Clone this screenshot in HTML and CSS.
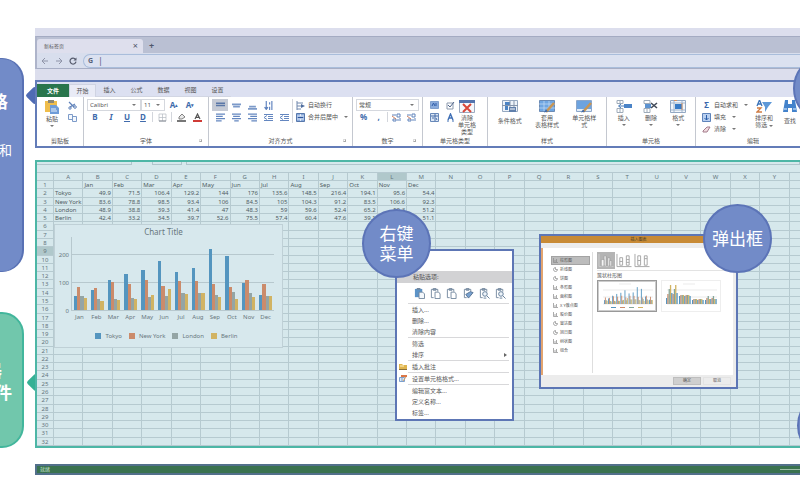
FILE: index.html
```html
<!DOCTYPE html>
<html lang="zh-CN">
<head>
<meta charset="utf-8">
<title>表格组件</title>
<link rel="stylesheet" href="styles.css">
</head>
<body>
<svg class="defs" aria-hidden="true">
  <symbol id="back" viewBox="0 0 8 8"><path d="M7 4H1M4 1L1 4l3 3" fill="none" stroke="#8f94a8"/></symbol>
  <symbol id="forward" viewBox="0 0 8 8"><path d="M1 4h6M4 1l3 3-3 3" fill="none" stroke="#8f94a8"/></symbol>
  <symbol id="reload" viewBox="0 0 8 8"><path d="M6.5 2.3A3 3 0 1 0 7 4.6" fill="none" stroke="#555a6c" stroke-width="1.2"/><path d="M7.5.5v3h-3z" fill="#555a6c"/></symbol>
  <symbol id="paste" viewBox="0 0 14 14"><path d="M0 1h12v11H0z" fill="#efbd4c"/><path d="M3 0h6v3H3z" fill="#8a8675"/><path d="M5 5h6l3 3v6H5z" fill="#6f9cd8"/><path d="M6 9h5M6 11h6" stroke="#e8f0fa"/></symbol>
  <symbol id="cut" viewBox="0 0 9 9"><path d="M1 1l5 5M2 6l5-3" stroke="#5e81b9" stroke-width="1.2"/><circle cx="7" cy="6" r="1.3" fill="none" stroke="#5e81b9"/><circle cx="2" cy="7" r="1.2" fill="none" stroke="#5e81b9"/></symbol>
  <symbol id="copy" viewBox="0 0 9 9"><path d="M.5 1.500h4v5h-4zM4.500 3.500h4v5h-4z" fill="#f4f8fd" stroke="#7d9bc9"/></symbol>
  <symbol id="border" viewBox="0 0 9 9"><path d="M1 1h7v7H1zM4.500 1v7M1 4.500h7" fill="none" stroke="#b5bac2" stroke-width=".7"/><path d="M1 8h7" stroke="#868b94"/></symbol>
  <symbol id="fill" viewBox="0 0 9 9"><path d="M2 4l3-3 3 3-3 2H2z" fill="#e8e8e8" stroke="#666" stroke-width=".8"/><path d="M0 8h9" stroke="#555" stroke-width="1.600"/></symbol>
  <symbol id="fontcolor" viewBox="0 0 9 9"><path d="M2 6l2.500-5L7 6M3 4.300h3" fill="none" stroke="#555" stroke-width="1.200"/><path d="M0 8h9" stroke="#cf3b36" stroke-width="2"/></symbol>
  <symbol id="vtop" viewBox="0 0 8 8"><path d="M0 2h8M0 4h8" stroke="#5a77a8" stroke-width="1.500"/></symbol>
  <symbol id="vmid" viewBox="0 0 8 8"><path d="M0 3h8M1 5h6" stroke="#7c9ac9" stroke-width="1.500"/></symbol>
  <symbol id="vbot" viewBox="0 0 8 8"><path d="M1 5h6M0 7h8" stroke="#7c9ac9" stroke-width="1.400"/></symbol>
  <symbol id="left" viewBox="0 0 8 8"><path d="M0 1h8M0 3h6M0 5h8M0 7h5" stroke="#6487c0"/></symbol>
  <symbol id="center" viewBox="0 0 8 8"><path d="M0 1h8M1 3h6M0 5h8M2 7h4" stroke="#6487c0"/></symbol>
  <symbol id="right" viewBox="0 0 8 8"><path d="M0 1h8M2 3h6M0 5h8M3 7h5" stroke="#6487c0"/></symbol>
  <symbol id="orient" viewBox="0 0 8 8"><path d="M2 0v7M0.500 5.500L2 7.500l1.500-2M5 1v2M5 5v3M7 0v8" fill="none" stroke="#5a7fbd"/></symbol>
  <symbol id="outdent" viewBox="0 0 9 8"><path d="M0 1h9M4 3h5M4 5h5M0 7h9M3 2L0 4l3 2" fill="none" stroke="#6487c0"/></symbol>
  <symbol id="wrap" viewBox="0 0 9 9"><path d="M1 0v9M1 2h6M1 5h6M1 8h4" stroke="#7188ad"/><path d="M5 3v4l4-2z" fill="#506e9e"/></symbol>
  <symbol id="merge" viewBox="0 0 9 9"><path d="M.5.500h8v8h-8z" fill="#8aabdc" stroke="#5878ab"/><path d="M1 3h7M1 6h7M4.500 1v2M4.500 6v2" stroke="#fff" stroke-width=".7"/><path d="M2 4.500h5" stroke="#2f559a"/></symbol>
  <symbol id="decimal" viewBox="0 0 9 9"><path d="M0 2h4M5 1h3v3H5zM1 6h3v2H1zM6 6v2M8 5v3" fill="none" stroke="#6084bc"/><path d="M0 3l4 3" stroke="#d28260"/></symbol>
  <symbol id="block" viewBox="0 0 9 9"><path d="M.5.500h8v7h-8z" fill="#8aabdc" stroke="#7f9fcd"/><path d="M2 5l1.500-3L5 5M6 2v3" fill="none" stroke="#2e5da8"/></symbol>
  <symbol id="check" viewBox="0 0 9 9"><path d="M1 2h6v6H1z" fill="#fff" stroke="#8c99ad"/><path d="M2 4l2 2 4-5" fill="none" stroke="#4d6389"/></symbol>
  <symbol id="list" viewBox="0 0 9 9"><path d="M.5.500h8v8h-8z" fill="#dce7f5" stroke="#6788b9"/><path d="M5 1v7M1 3h7M2 5h2M6 5l1 2" stroke="#476da8"/></symbol>
  <symbol id="bluea" viewBox="0 0 9 9"><path d="M2 7l2.500-6L7 7M3 5h3" fill="none" stroke="#4170b5" stroke-width="1.400"/><path d="M1 8h2M6 8h2" stroke="#4170b5"/></symbol>
  <symbol id="clear" viewBox="0 0 16 13"><path d="M.5.500h15v12H.5z" fill="#f5f7fb" stroke="#9ba9c0"/><path d="M0 1.500h16" stroke="#5273ad" stroke-width="3"/><path d="M4 4l8 8M12 4l-8 8" stroke="#d84538" stroke-width="2"/></symbol>
  <symbol id="cond" viewBox="0 0 16 13"><path d="M.5.500h15v11H.5z" fill="#edf3fa" stroke="#95a8c0"/><path d="M3 2h5v3H3zM3 6h3v4H3z" fill="#4a82c3"/><path d="M8 1v10M0 5.500h16M12 1v10" stroke="#8595ab"/><path d="M7 7h7v5H7z" fill="#5f7fab"/><path d="M8 9h5" stroke="#fff"/></symbol>
  <symbol id="tablestyle" viewBox="0 0 16 13"><path d="M.5.500h15v11H.5z" fill="#6fa6e2" stroke="#6b8bb5"/><path d="M0 4h16M0 8h16M5 1v10M10 1v10" stroke="#c5dcf5" stroke-width=".7"/><path d="M7 12l8-9" stroke="#c99552" stroke-width="2.500"/><path d="M5 12.500l4-1-2-2z" fill="#3a67ab"/></symbol>
  <symbol id="cellstyle" viewBox="0 0 16 13"><path d="M.5.500h15v11H.5z" fill="#e2edf8" stroke="#8ba6ca"/><path d="M1 1h14v8H1z" fill="#6da3df"/><path d="M7 12l8-9" stroke="#c99552" stroke-width="2.500"/><path d="M5 12.500l4-1-2-2z" fill="#3a67ab"/></symbol>
  <symbol id="insert" viewBox="0 0 16 13"><path d="M1 .5h6v3H1zM1 8.500h6v4H1zM4 1v3M4 9v3" fill="#fff" stroke="#9eabb9"/><path d="M8 4h8v4H8z" fill="#4a83c7"/><path d="M3 6h5M5 4L2.500 6 5 8" fill="none" stroke="#4478b7"/></symbol>
  <symbol id="delete" viewBox="0 0 16 13"><path d="M1 .5h6v3H1zM1 8.500h6v4H1zM4 9v3" fill="#fff" stroke="#9eabb9"/><path d="M2 4h6v4H2z" fill="#5c93d1"/><path d="M8 3l6 5M14 3L8 8" stroke="#424b59" stroke-width="1.600"/></symbol>
  <symbol id="format" viewBox="0 0 16 13"><path d="M.5.500h15v12H.5z" fill="#f2f6fb" stroke="#93a8c3"/><path d="M4 1v11M12 1v11M1 3h14M1 10h14" stroke="#a0b5ce"/><path d="M5 4h7v5H5z" fill="#377bc7"/><path d="M4 .5h3M12 3v7" stroke="#d49262"/></symbol>
  <symbol id="fillblue" viewBox="0 0 9 9"><path d="M.5.500h8v8h-8z" fill="#b8cff0" stroke="#5e83ba"/><path d="M4.500 2v5M2.500 5l2 2 2-2" fill="none" stroke="#285da9"/></symbol>
  <symbol id="eraser" viewBox="0 0 9 9"><path d="M1 6l4-4h3L5 7H1z" fill="#f1dce0" stroke="#a47c8c"/></symbol>
  <symbol id="sort" viewBox="0 0 16 13"><path d="M1 6l2.500-6L6 6M2 4h3" fill="none" stroke="#3b73b9" stroke-width="1.300"/><path d="M1 8h4l-4 4h5" fill="none" stroke="#d07c43" stroke-width="1.300"/><path d="M6 2h10l-4 5-3 5V7z" fill="#5d98d8"/></symbol>
  <symbol id="find" viewBox="0 0 16 13"><path d="M3 0h3v4h4V0h3l2 12h-5V8H6v4H1z" fill="#4382cb"/><path d="M2 9h3M11 9h3" stroke="#93bbe8" stroke-width="2"/></symbol>
  <symbol id="clip" viewBox="0 0 12 12"><path d="M4 10.500H1.500v-9h7V4M3.500.500h3v2h-3z" fill="none" stroke="#72879e"/><path d="M5.500 4.500h4l1.500 2v5H5.500z" fill="#fff" stroke="#72879e"/></symbol>
  <symbol id="clipblue" viewBox="0 0 12 12"><path d="M1 1h8v9H1z" fill="#5c93c7"/><path d="M3 0h4v2H3z" fill="#72879e"/><path d="M5.500 4.500h4l2 2v5h-6z" fill="#f4f8fc" stroke="#72879e"/></symbol>
  <symbol id="clippen" viewBox="0 0 12 12"><path d="M4 10.500H1.500v-9h7V4M3.500.500h3v2h-3z" fill="none" stroke="#72879e"/><path d="M3 7l3 4 5-6-3-1z" fill="#78a1cf" stroke="#526f90"/></symbol>
  <symbol id="cliplink" viewBox="0 0 12 12"><path d="M4 10.500H1.500v-9h7V4M3.500.500h3v2h-3z" fill="none" stroke="#72879e"/><circle cx="6.500" cy="6.500" r="2.500" fill="#eef4fa" stroke="#5e7996"/><path d="M8.500 8.500l3 3M5 11h3" stroke="#5e7996"/></symbol>
  <symbol id="note" viewBox="0 0 8 7"><path d="M0 1h3l1 1h4v5H0z" fill="#dfb44f"/><path d="M0 6.500h8" stroke="#8b7138"/><path d="M1 3h4" stroke="#fff0bb"/></symbol>
  <symbol id="cellformat" viewBox="0 0 8 7"><path d="M2 0h6v2H2z" fill="#db7746"/><path d="M.5 2.500h5v4h-5zM3 3v3" fill="#dcebfa" stroke="#7da0cc"/><path d="M7 2L4 6" stroke="#d9a267"/></symbol>
  <symbol id="bars" viewBox="0 0 18 16"><path d="M1.500 1v13.500H17" fill="none" stroke="#ccc"/><path d="M4 7h3v7H4zM7 3h2v11H7zM11 5h2v9h-2zM13 8h2v6h-2z" class="bar-shape"/></symbol>
  <symbol id="stack" viewBox="0 0 18 16"><path d="M1.500 1v13.500H17M4.500 5h3v8h-3zM4.500 9h3M11.500 3h3v10h-3zM11.500 7h3M11.500 10h3" fill="none" stroke="#a4a4a4"/></symbol>
  <symbol id="full" viewBox="0 0 18 16"><path d="M1.500 1v13.500H17M4.500 3h3v10h-3zM4.500 8h3M11.500 3h3v10h-3zM11.500 6h3" fill="none" stroke="#a4a4a4"/></symbol>
  <symbol id="t-bar" viewBox="0 0 5 5"><path d="M.5 0v4.500H5M2 2v2M3.500 1v3" fill="none" stroke="#888" stroke-width=".7"/></symbol>
  <symbol id="t-pie" viewBox="0 0 5 5"><path d="M2.500.500a2 2 0 1 0 2 2h-2z" fill="none" stroke="#888" stroke-width=".7"/></symbol>
</svg>

<div class="page">
  <aside class="callouts">
    <section class="callout callout-blue"><h2>格</h2><p>和</p></section>
    <section class="callout callout-green"><h2>器</h2><h2 class="second">件</h2></section>
  </aside>

  <main class="stack">
    <header class="browser">
      <div class="tabstrip">
        <div class="tab"><span>新标签页</span><button aria-label="关闭">×</button></div>
        <button class="newtab" aria-label="新建标签页">+</button>
      </div>
      <div class="addressbar">
        <button aria-label="后退"><svg><use href="#back"/></svg></button>
        <button aria-label="前进"><svg><use href="#forward"/></svg></button>
        <button aria-label="刷新"><svg><use href="#reload"/></svg></button>
        <label class="omnibox"><b>G</b><input type="text" aria-label="地址" value="|"></label>
      </div>
    </header>

    <section class="ribbon">
      <i class="pointer pointer-blue"></i>
      <div class="ribbon-view">
        <nav class="menu">
          <button class="file">文件</button><button class="current">开始</button><button>插入</button><button>公式</button><button>数据</button><button>视图</button><button>设置</button>
        </nav>
        <div class="groups">
          <section class="group g-clipboard">
            <div class="tools">
              <button class="big"><svg class="paste-icon"><use href="#paste"/></svg><span>粘贴</span><i class="caret"></i></button>
              <div class="col">
                <button class="tool" aria-label="剪切"><svg><use href="#cut"/></svg></button>
                <button class="tool" aria-label="复制"><svg><use href="#copy"/></svg></button>
              </div>
            </div>
            <h3>剪贴板</h3>
          </section>
          <section class="group g-font">
            <div class="col">
              <div class="row">
                <span class="pick pick-font"><select aria-label="字体"><option>Calibri</option></select><i class="caret"></i></span>
                <span class="pick pick-size"><select aria-label="字号"><option>11</option></select><i class="caret"></i></span>
                <button class="tool letter">A<sup>▴</sup></button><button class="tool letter">A<sup>▾</sup></button>
              </div>
              <div class="row">
                <button class="tool letter">B</button><button class="tool letter italic">I</button><button class="tool letter underline">U</button><button class="tool letter underline">D</button><i class="rule"></i>
                <button class="tool" aria-label="边框"><svg><use href="#border"/></svg></button><i class="rule"></i>
                <button class="tool" aria-label="填充颜色"><svg><use href="#fill"/></svg></button>
                <button class="tool" aria-label="字体颜色"><svg><use href="#fontcolor"/></svg></button>
              </div>
            </div>
            <h3>字体</h3><i class="launcher"></i>
          </section>
          <section class="group g-align">
            <div class="tools">
              <div class="col aligns">
                <div class="row">
                  <button class="tool pressed" aria-label="顶端对齐"><svg><use href="#vtop"/></svg></button>
                  <button class="tool" aria-label="垂直居中"><svg><use href="#vmid"/></svg></button>
                  <button class="tool" aria-label="底端对齐"><svg><use href="#vbot"/></svg></button>
                  <button class="tool" aria-label="方向"><svg><use href="#orient"/></svg></button>
                </div>
                <div class="row">
                  <button class="tool" aria-label="左对齐"><svg><use href="#left"/></svg></button>
                  <button class="tool" aria-label="居中"><svg><use href="#center"/></svg></button>
                  <button class="tool" aria-label="右对齐"><svg><use href="#right"/></svg></button>
                  <button class="tool" aria-label="减少缩进"><svg><use href="#outdent"/></svg></button>
                  <button class="tool" aria-label="增加缩进"><svg><use href="#outdent"/></svg></button>
                </div>
              </div>
              <div class="col ruled">
                <button class="wide"><svg><use href="#wrap"/></svg>自动换行</button>
                <button class="wide"><svg><use href="#merge"/></svg>合并后居中<i class="caret"></i></button>
              </div>
            </div>
            <h3>对齐方式</h3><i class="launcher"></i>
          </section>
          <section class="group g-number">
            <div class="col">
              <div class="row"><span class="pick pick-number"><select aria-label="数字格式"><option>常规</option></select><i class="caret"></i></span></div>
              <div class="row">
                <button class="tool letter">%</button><button class="tool letter">,</button><i class="rule"></i>
                <button class="tool" aria-label="增加小数位"><svg><use href="#decimal"/></svg></button>
                <button class="tool" aria-label="减少小数位"><svg><use href="#decimal"/></svg></button>
              </div>
            </div>
            <h3>数字</h3><i class="launcher"></i>
          </section>
          <section class="group g-type">
            <div class="tools">
              <div class="col">
                <div class="row"><button class="tool" aria-label="按钮"><svg><use href="#block"/></svg></button><button class="tool" aria-label="复选框"><svg><use href="#check"/></svg></button></div>
                <div class="row"><button class="tool" aria-label="列表"><svg><use href="#list"/></svg></button><button class="tool" aria-label="超链接"><svg><use href="#bluea"/></svg></button></div>
              </div>
              <button class="big"><svg><use href="#clear"/></svg><span>清除<br>单元格<br>类型</span></button>
            </div>
            <h3>单元格类型</h3>
          </section>
          <section class="group g-style">
            <div class="tools spread">
              <button class="big single"><svg><use href="#cond"/></svg><span>条件格式</span></button>
              <button class="big"><svg><use href="#tablestyle"/></svg><span>套用<br>表格样式</span></button>
              <button class="big"><svg><use href="#cellstyle"/></svg><span>单元格样<br>式</span></button>
            </div>
            <h3>样式</h3>
          </section>
          <section class="group g-cells">
            <div class="tools spread">
              <button class="big"><svg><use href="#insert"/></svg><span>插入</span><i class="caret"></i></button>
              <button class="big"><svg><use href="#delete"/></svg><span>删除</span><i class="caret"></i></button>
              <button class="big"><svg><use href="#format"/></svg><span>格式</span><i class="caret"></i></button>
            </div>
            <h3>单元格</h3>
          </section>
          <section class="group g-edit">
            <div class="tools">
              <div class="col">
                <button class="wide"><b>Σ</b>自动求和<i class="caret"></i></button>
                <button class="wide"><svg><use href="#fillblue"/></svg>填充<i class="caret"></i></button>
                <button class="wide"><svg><use href="#eraser"/></svg>清除<i class="caret"></i></button>
              </div>
              <button class="big"><svg><use href="#sort"/></svg><span>排序和<br>筛选 <i class="caret"></i></span></button>
              <button class="big single"><svg><use href="#find"/></svg><span>查找</span></button>
            </div>
            <h3>编辑</h3>
          </section>
        </div>
      </div>
      <span class="badge badge-ribbon"></span>
    </section>

    <section class="sheet">
      <i class="pointer pointer-green"></i>
      <div class="sheet-view">
        <div class="formula"><span class="namebox"></span><span class="fx"></span><span class="formula-text"></span></div>
        <table class="cells" id="cells"></table>
      </div>

      <figure class="chart">
        <figcaption>Chart Title</figcaption>
        <div class="plot-row">
          <div class="scale"><span>200</span><span>100</span><span>0</span></div>
          <div class="plot" id="plot"></div>
        </div>
        <div class="months" id="months"></div>
        <div class="legend"><span class="s0">Tokyo</span><span class="s1">New York</span><span class="s2">London</span><span class="s3">Berlin</span></div>
      </figure>

      <div class="context">
        <h3>粘贴选项:</h3>
        <div class="paste-options">
          <button aria-label="粘贴"><svg><use href="#clipblue"/></svg></button>
          <button aria-label="值"><svg><use href="#clip"/></svg></button>
          <button aria-label="公式"><svg><use href="#clip"/></svg></button>
          <button aria-label="格式"><svg><use href="#clippen"/></svg></button>
          <button aria-label="转置"><svg><use href="#cliplink"/></svg></button>
          <button aria-label="链接"><svg><use href="#cliplink"/></svg></button>
        </div>
        <hr>
        <button>插入...</button><button>删除...</button><button>清除内容</button>
        <hr>
        <button>筛选</button><button>排序<i class="more"></i></button>
        <hr>
        <button><svg><use href="#note"/></svg>插入批注</button>
        <hr>
        <button><svg><use href="#cellformat"/></svg>设置单元格格式...</button>
        <hr>
        <button>编辑富文本...</button><button>定义名称...</button><button>标签...</button>
      </div>

      <div class="dialog">
        <h3>插入图表</h3>
        <div class="dialog-main">
          <nav class="kinds">
            <button class="on"><svg><use href="#t-bar"/></svg>柱形图</button>
            <button><svg><use href="#t-pie"/></svg>折线图</button>
            <button><svg><use href="#t-pie"/></svg>饼图</button>
            <button><svg><use href="#t-bar"/></svg>条形图</button>
            <button><svg><use href="#t-bar"/></svg>面积图</button>
            <button><svg><use href="#t-bar"/></svg>X Y散点图</button>
            <button><svg><use href="#t-bar"/></svg>股价图</button>
            <button><svg><use href="#t-pie"/></svg>雷达图</button>
            <button><svg><use href="#t-pie"/></svg>旭日图</button>
            <button><svg><use href="#t-bar"/></svg>树状图</button>
            <button><svg><use href="#t-bar"/></svg>组合</button>
          </nav>
          <div class="preview">
            <div class="subtypes">
              <button class="on" aria-label="簇状"><svg><use href="#bars"/></svg></button>
              <button aria-label="堆积"><svg><use href="#stack"/></svg></button>
              <button aria-label="百分比堆积"><svg><use href="#full"/></svg></button>
            </div>
            <h4>簇状柱形图</h4>
            <div class="thumbs">
              <svg class="thumb chosen" id="thumb-month" viewBox="0 0 56 28"></svg>
              <svg class="thumb" id="thumb-city" viewBox="0 0 56 28"></svg>
            </div>
          </div>
        </div>
        <div class="dialog-foot"><button class="ok">确定</button><button>取消</button></div>
      </div>

      <span class="badge badge-context">右键<br>菜单</span>
      <span class="badge badge-dialog">弹出框</span>
      <span class="badge badge-corner"></span>
    </section>

    <footer class="status"><span>就绪</span><i></i></footer>
  </main>
</div>
<script src="script.js"></script>
</body>
</html>
```
FILE: styles.css
```css
* { box-sizing: border-box; }
body { margin: 0; background: #fff; color: #555; font: 6px/8px "Noto Sans", "Noto Sans CJK SC", sans-serif; }
button, input, select { margin: 0; padding: 0; border: 0; background: none; color: inherit; font: inherit; appearance: none; }
h2, h3, h4, p, figure { margin: 0; font-weight: 400; font-size: inherit; }
svg { display: block; flex: none; }
.defs { position: absolute; width: 0; height: 0; }
.page { display: grid; grid-template-columns: 24px minmax(0, 1fr); column-gap: 11px; overflow: hidden; isolation: isolate; }

.callouts { padding-top: 58px; display: flex; flex-direction: column; gap: 40px; }
.callout { margin-left: -40px; color: #fff; text-align: right; border-radius: 22px; }
.callout-blue { height: 214px; padding: 32px 14px 0 0; background: #728bc8; border: 1px solid #5871b4; border-right-width: 2px; }
.callout-green { height: 136px; padding: 46px 10px 0 0; background: #71c7ac; border: 2px solid #42b69c; }
.callout h2 { font-size: 17px; line-height: 22px; font-weight: 700; }
.callout-green h2 { padding-right: 10px; }
.callout-green .second { padding-right: 0; }
.callout-blue p { margin: 26px -4px 0 0; font-size: 13px; line-height: 22px; }

.stack { min-width: 0; padding-top: 28px; }
.browser { padding: 8px 0 11px; background: #dcdeed; }
.tabstrip { display: flex; align-items: end; height: 17px; background: #bac0d3; border-top: 1px solid #a4abc2; border-left: 2px solid #aeb4ca; }
.tab { display: flex; justify-content: space-between; align-items: center; width: 106px; height: 14px; padding: 0 5px 0 7px; background: #dedfed; border-radius: 3px 3px 0 0; font-size: 5px; }
.tab button, .newtab { font-size: 9px; color: #50566b; }
.newtab { height: 14px; padding: 0 6px; line-height: 14px; font-weight: 700; }
.addressbar { display: flex; align-items: center; gap: 6px; height: 16px; padding-left: 4px; background: #d8deed; border-bottom: 1px solid #a7aec5; border-left: 2px solid #aeb4ca; }
.addressbar svg { width: 8px; height: 8px; }
.omnibox { flex: 1; display: flex; align-items: center; gap: 5px; height: 14px; padding-left: 4px; border: 1px solid #a9bddb; border-right: 0; border-radius: 8px 0 0 8px; background: #dbe1f0; color: #57617a; font-size: 7px; }
.omnibox input { flex: 1; min-width: 0; font-size: 9px; line-height: 12px; }

.ribbon { position: relative; border: 2px solid #637cb8; border-right: 0; background: #fff; }
.ribbon-view { overflow: hidden; }
.menu { display: flex; height: 15px; padding-top: 2px; background: #dce0f1; }
.menu button { width: 27px; border-bottom: 1px solid #d2d6e3; }
.menu .file { width: 32px; background: #29754c; color: #fff; border: 0; font-weight: 700; }
.menu .current { background: #e9ebf6; border: 1px solid #cfd3e2; border-bottom: 0; }
.groups { display: flex; height: 49px; }
.group { position: relative; flex: none; display: flex; flex-direction: column; justify-content: space-between; padding: 2px 3px 1px; border-right: 1px solid #c4c8d0; }
.group h3 { text-align: center; }
.g-clipboard { width: 47px; }
.g-font { width: 125px; }
.g-align { width: 144px; }
.g-number { width: 70px; }
.g-type { width: 65px; }
.g-style { width: 119px; }
.g-cells { width: 89px; }
.g-edit { width: 118px; border: 0; }
.g-edit h3 { padding-right: 4px; }
.tools, .row { display: flex; }
.col { display: flex; flex-direction: column; }
.row { height: 12px; align-items: center; }
.spread { justify-content: space-around; }
.tool { display: flex; align-items: center; justify-content: center; width: 16px; height: 12px; }
.tool svg, .wide svg { width: 9px; height: 9px; }
.pressed { background: #c5cad5; }
.letter { color: #416bac; font-size: 8px; font-weight: 700; }
.letter sup { font-size: 5px; line-height: 4px; }
.italic { font-style: italic; }
.underline { text-decoration: underline; }
.rule { width: 1px; height: 10px; margin: 0 1px; background: #d3d6dc; }
.big { display: flex; flex-direction: column; align-items: center; padding-top: 1px; line-height: 7px; }
.big svg { width: 16px; height: 13px; margin-bottom: 2px; }
.big .paste-icon { width: 14px; height: 14px; }
.single span { padding-top: 3px; }
.g-clipboard .tools { justify-content: space-between; padding-left: 5px; }
.caret { display: inline-block; flex: none; border: 2px solid transparent; border-top-color: #777; border-bottom: 0; }
.big > .caret { margin-top: 2px; }
.pick { display: flex; align-items: center; height: 12px; padding-right: 4px; border: 1px solid #d5d8de; }
.pick select { flex: 1; min-width: 0; padding-left: 2px; }
.pick-font { width: 54px; }
.pick-size { width: 24px; margin-right: 1px; }
.pick-number { width: 64px; }
.aligns { width: 80px; }
.ruled { padding-left: 3px; border-left: 1px solid #d3d6dc; }
.wide { display: flex; align-items: center; gap: 3px; height: 12px; white-space: nowrap; }
.wide .caret { margin-left: 3px; }
.wide b { width: 9px; color: #3866ab; font-size: 8px; }
.g-edit .tools { gap: 6px; padding-left: 3px; }
.g-edit .col { width: 47px; }
.g-edit .big + .big { margin-left: 3px; }
.launcher { position: absolute; right: 6px; bottom: 4px; width: 3px; height: 3px; border: 1px solid #aaa; border-top-color: #ddd; border-left-color: #ddd; }
.pointer { position: absolute; width: 13px; height: 13px; transform: rotate(45deg); border-radius: 2px; z-index: -1; }
.pointer-blue { left: -9px; top: 7px; background: #4f6bb4; }
.pointer-green { left: -8px; top: 214px; background: #35b195; }

.sheet { position: relative; margin-top: 12px; border: 2px solid #4db6a6; border-right: 0; background: #d6e8ec; }
.sheet-view { overflow: hidden; }
.formula { display: flex; height: 11px; padding-bottom: 7px; gap: 20px; border-bottom: 1px solid #b5c9d0; }
.namebox { width: 95px; border: 1px solid #b0c5cc; border-top: 0; border-left: 0; }
.fx { width: 30px; border: 1px solid #b0c5cc; border-top: 0; margin-right: -16px; }
.formula-text { flex: 1; border: 1px solid #b0c5cc; border-top: 0; }
.cells { display: grid; grid-template: 8px repeat(32, 1fr) / 17px repeat(26, 1fr); width: calc(100% + 19px); height: 273px; color: #4f5c62; }
.cells tbody, .cells thead, .cells tr { display: contents; }
.cells th, .cells td { min-width: 0; min-height: 0; padding: 0 1px; overflow: hidden; border: 0 solid #b6cad0; border-right-width: 1px; border-bottom-width: 1px; font-weight: 400; white-space: nowrap; text-align: left; }
.cells th { text-align: center; color: #65757c; }
.cells td.num { text-align: right; }
.cells .active { background: #b0c8cb; }

.chart { position: absolute; left: 17px; top: 62px; width: 229px; height: 124px; padding: 2px 8px 0 4px; background: #d7e8ed; border: 1px solid #bfd0d6; color: #68777e; }
.chart figcaption { text-align: center; font-size: 8px; line-height: 10px; padding-right: 6px; }
.plot-row { display: flex; height: 74px; }
.scale { width: 12px; display: flex; flex-direction: column; gap: 20px; align-items: end; padding: 14px 2px 0 0; }
.plot { flex: 1; display: flex; align-items: end; border-left: 1px solid #b7c8ce; border-bottom: 1px solid #b7c8ce; background: linear-gradient(#b7c8ce, #b7c8ce) 0 17px / 100% 1px no-repeat, linear-gradient(#b7c8ce, #b7c8ce) 0 45px / 100% 1px no-repeat; }
.cluster { flex: 1; display: flex; align-items: end; padding: 0 2px; }
.cluster i { flex: 1; }
.s0 { --series: #5495bf; }
.s1 { --series: #cb8b6b; }
.s2 { --series: #94a5a5; }
.s3 { --series: #d1b363; }
.cluster i, .legend span::before { background: var(--series); }
.months { display: flex; padding: 2px 0 0 12px; text-align: center; }
.months span { flex: 1; }
.legend { display: flex; justify-content: center; gap: 7px; padding: 11px 0 0; }
.legend span { display: flex; align-items: center; gap: 4px; }
.legend span::before { content: ""; width: 6px; height: 6px; }

.context { position: absolute; left: 358px; top: 87px; width: 119px; padding: 20px 0 1px; background: #fff; border: 2px solid #5d76b5; }
.context h3 { height: 12px; padding-left: 16px; line-height: 12px; background: #d2d2d4; }
.context hr { margin: 0 3px 0 11px; border: 0; border-top: 1px solid #d8d8da; }
.context > button { position: relative; display: flex; align-items: center; width: 100%; height: 11px; padding-left: 15px; }
.context > button svg { width: 8px; height: 7px; margin: 0 5px 0 -13px; }
.more { margin-left: auto; margin-right: 5px; border: 2px solid transparent; border-left: 3px solid #666; border-right: 0; }
.paste-options { display: flex; justify-content: space-between; align-items: center; height: 20px; padding: 0 6px 0 17px; }
.paste-options svg { width: 11px; height: 11px; }

.dialog { position: absolute; left: 502px; top: 72px; width: 199px; height: 155px; display: flex; flex-direction: column; background: #ececec; border: 2px solid #5d76b5; font-size: 4px; line-height: 6px; }
.dialog h3 { height: 7px; background: #c88a35; text-align: center; line-height: 7px; font-size: 4px; color: #4b3a22; }
.dialog-main { flex: 1; display: flex; margin: 5px 3px 0 0; padding: 4px 2px 2px 8px; background: #fff; border-left: 2px solid #e2a46f; }
.kinds { display: flex; flex-direction: column; width: 42px; padding-top: 4px; border-right: 1px solid #dedede; }
.kinds button { display: flex; align-items: center; gap: 2px; width: 39px; height: 9px; padding-left: 2px; }
.kinds svg { width: 5px; height: 5px; }
.kinds .on { background: #bcbcbc; border: 1px solid #a3a3a3; padding-left: 1px; }
.preview { flex: 1; min-width: 0; padding-left: 4px; }
.subtypes { display: flex; border-bottom: 1px solid #e3e3e3; padding-bottom: 1px; }
.subtypes button { padding: 1px 0; }
.subtypes .on { background: #b4b4b4; }
.subtypes svg { width: 18px; height: 15px; }
.bar-shape { fill: #f5f5f5; stroke: #888; stroke-width: .5px; }
.preview h4 { font-size: 5px; line-height: 9px; }
.thumbs { display: flex; gap: 4px; }
.thumb { width: 60px; height: 32px; padding: 1px; border: 1px solid #eee; }
.chosen { border: 1px solid #999; outline: 1px solid #ccc; outline-offset: -2px; }
.dialog-foot { display: flex; justify-content: flex-end; gap: 2px; height: 12px; padding: 2px 5px; }
.dialog-foot button { width: 28px; height: 8px; border: 1px solid #e3e3e3; line-height: 6px; text-align: center; }
.dialog-foot .ok { background: #cfcfcf; border-color: #bebebe; }

.badge { position: absolute; display: flex; align-items: center; justify-content: center; width: 69px; height: 69px; border-radius: 50%; background: #728bc8; border: 2px solid #5c74b7; color: #fff; font-size: 17px; line-height: 20px; white-space: nowrap; }
.badge-ribbon { right: -62px; top: -28px; }
.badge-context { left: 325px; top: 47px; }
.badge-dialog { left: 666px; top: 42px; }
.badge-corner { right: -66px; top: 229px; }

.status { display: flex; justify-content: space-between; align-items: center; height: 11px; margin-top: 16px; padding-left: 3px; background: #3a724f; border: 2px solid #52708b; border-right: 0; color: #c9e4d1; font-size: 5px; line-height: 7px; }
.status i { width: 20px; height: 1px; background: #9fbfaa; }
```
FILE: script.js
```js
const months = ["Jan", "Feb", "Mar", "Apr", "May", "Jun", "Jul", "Aug", "Sep", "Oct", "Nov", "Dec"];
const series = [
  ["Tokyo", 49.9, 71.5, 106.4, 129.2, 144, 176, 135.6, 148.5, 216.4, 194.1, 95.6, 54.4],
  ["New York", 83.6, 78.8, 98.5, 93.4, 106, 84.5, 105, 104.3, 91.2, 83.5, 106.6, 92.3],
  ["London", 48.9, 38.8, 39.3, 41.4, 47, 48.3, 59, 59.6, 52.4, 65.2, 59.3, 51.2],
  ["Berlin", 42.4, 33.2, 34.5, 39.7, 52.6, 75.5, 57.4, 60.4, 47.6, 39.1, 46.8, 51.1]
];
const colors = ["#5495bf", "#cb8b6b", "#84a59a", "#d1b363"];

const rows = [["", ...months], ...series];
let html = "<thead><tr><th></th>";
for (let c = 0; c < 26; c++) {
  html += `<th class="${c === 11 ? "active" : ""}">${c < 25 ? String.fromCharCode(65 + c) : ""}</th>`;
}
html += "</tr></thead><tbody>";
for (let r = 0; r < 32; r++) {
  html += `<tr><th class="${r === 8 ? "active" : ""}">${r + 1}</th>`;
  for (let c = 0; c < 26; c++) {
    const value = rows[r] && rows[r][c] !== undefined ? rows[r][c] : "";
    html += `<td class="${typeof value === "number" ? "num" : ""}">${value}</td>`;
  }
  html += "</tr>";
}
document.getElementById("cells").innerHTML = html + "</tbody>";

document.getElementById("plot").innerHTML = months.map((_, m) =>
  `<div class="cluster">${series.map((s, i) => `<i class="s${i}" style="height:${Math.round(s[m + 1] * 0.28)}px"></i>`).join("")}</div>`
).join("");
document.getElementById("months").innerHTML = months.map(m => `<span>${m}</span>`).join("");

const rect = (x, h, w, i) => `<rect x="${x}" y="${22 - h}" width="${w}" height="${h}" fill="${colors[i]}"/>`;
const frame = '<path d="M20 2h12M4 8h50M4 15h50M4 22h50" stroke="#ddd" stroke-width=".6"/>';
document.getElementById("thumb-month").innerHTML = frame +
  months.map((_, m) => series.map((s, i) => rect(5 + m * 4.1 + i * 0.9, s[m + 1] * 0.078, 0.9, i)).join("")).join("") +
  colors.map((c, i) => `<rect x="${12 + i * 9}" y="25" width="5" height="1" fill="${c}"/>`).join("");
const cities = [[6, 10, 15, 19, 11], [8, 9, 9, 9, 8], [4, 5, 5, 5, 4], [4, 6, 8, 5, 5]];
document.getElementById("thumb-city").innerHTML = frame +
  cities.map((g, k) => g.concat(g.slice(1)).map((h, i) => rect(3 + k * 13 + i * 1.3, h, 1.3, i % 4)).join("")).join("");
```
